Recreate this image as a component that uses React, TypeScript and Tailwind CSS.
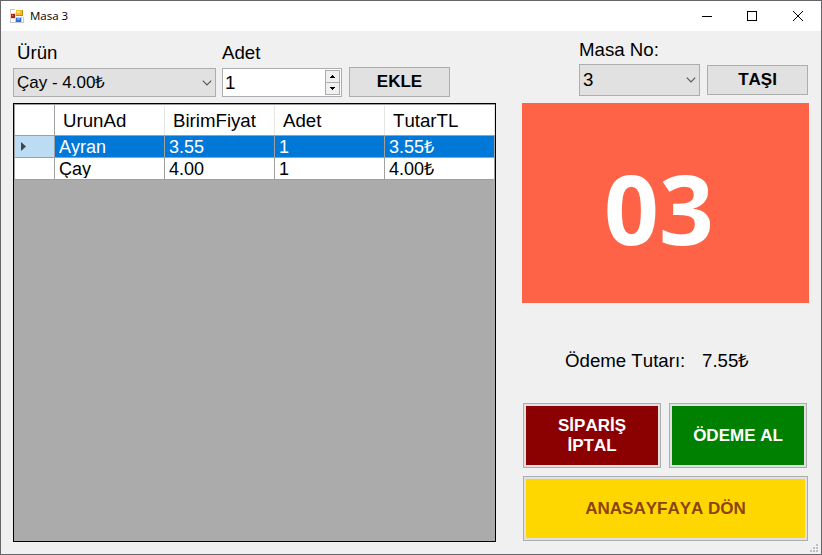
import React from "react";

const rows = [
  { name: "Ayran", price: "3.55", qty: "1", total: "3.55₺", selected: true },
  { name: "Çay", price: "4.00", qty: "1", total: "4.00₺", selected: false },
];

const headers = ["UrunAd", "BirimFiyat", "Adet", "TutarTL"];

function Chevron() {
  return (
    <svg width="10" height="6" viewBox="0 0 10 6" className="shrink-0" fill="none" stroke="#555" strokeWidth="1.1">
      <path d="M0.8 0.7 5 4.9 9.2 0.7" />
    </svg>
  );
}

function FormIcon() {
  return (
    <svg width="14" height="14" viewBox="0 0 14 14" shapeRendering="crispEdges">
      <rect width="14" height="14" fill="#c9c9c9" />
      <path d="M1 1h4v3H1zM1 10h4v3H1zM12 8h1v5h-1z" fill="#fff" />
      <path d="M5 0h9v8H5z" fill="#fff" />
      <rect x="6" y="1" width="7" height="6" fill="#c58a10" />
      <rect x="6" y="1" width="6" height="5" fill="#f6bb2c" />
      <rect x="7" y="2" width="3" height="2" fill="#ffe27c" />
      <rect x="0" y="4" width="6" height="6" fill="#e8d9d6" />
      <rect x="1" y="5" width="4" height="4" fill="#b3200f" />
      <rect x="2" y="6" width="1" height="1" fill="#ee7a60" />
      <rect x="6" y="9" width="5" height="4" fill="#2f6fd8" />
      <rect x="7" y="9" width="3" height="2" fill="#6ba4f5" />
    </svg>
  );
}

function PushButton({ children, className }: { children: React.ReactNode; className: string }) {
  return (
    <button className={`flex shrink-0 items-center justify-center border border-[#adadad] bg-[#e1e1e1] text-[17px] font-bold leading-5 ${className}`}>
      {children}
    </button>
  );
}

function ColorButton({ children, className, fill }: { children: React.ReactNode; className: string; fill: string }) {
  return (
    <button className={`flex shrink-0 border border-[#adadad] bg-[#e1e1e1] p-[2px] text-[17px] font-bold leading-5 ${className}`}>
      <span className={`flex h-full w-full items-center justify-center text-center ${fill}`}>{children}</span>
    </button>
  );
}

function TitleBar() {
  return (
    <header className="flex h-[30px] shrink-0 items-center bg-white pl-[9px]">
      <FormIcon />
      <h1 className="ml-[6px] flex-1 font-['Open_Sans','Noto_Sans',sans-serif] text-[11.5px] leading-4">Masa 3</h1>
      <svg width="10" height="10" className="mr-[35px]" shapeRendering="crispEdges">
        <path d="M0 5.5h10" stroke="#000" />
      </svg>
      <svg width="10" height="10" className="mr-[36px]" fill="none" shapeRendering="crispEdges">
        <path d="M.5.5h9v9h-9z" stroke="#000" />
      </svg>
      <svg width="10" height="10" className="mr-[18px]">
        <path d="M0 0 10 10M10 0 0 10" stroke="#000" />
      </svg>
    </header>
  );
}

function OrderGrid() {
  return (
    <div className="h-[439px] w-[483px] border border-black bg-[#ababab]">
      <div className="w-full border-l border-t border-[#a0a0a0]">
        <div className="flex h-[31px] border-b border-[#a0a0a0] bg-white">
          <div className="w-10 border-r border-[#a0a0a0]" />
          {headers.map((h) => (
            <div key={h} className="mt-px w-[110px] border-r border-[#e5e5e5] pl-2 leading-[29px]">{h}</div>
          ))}
        </div>
        {rows.map((r) => (
          <div key={r.name} className={`flex h-[22px] border-b border-[#a0a0a0] ${r.selected ? "bg-[#0078d7] text-white" : "bg-white"}`}>
            <div className={`flex w-10 items-center border-r border-[#a0a0a0] pl-[6px] ${r.selected ? "bg-[#bcdcf4]" : ""}`}>
              {r.selected && (
                <svg width="5" height="9">
                  <path d="M0 0 5 4.5 0 9z" fill="#444" />
                </svg>
              )}
            </div>
            {[r.name, r.price, r.qty, r.total].map((v, i) => (
              <div key={i} className="w-[110px] border-r border-[#a0a0a0] pl-1">
                <div className="h-5 overflow-hidden text-[18px] leading-[23px]">{v}</div>
              </div>
            ))}
          </div>
        ))}
      </div>
    </div>
  );
}

export default function App() {
  return (
    <div className="flex h-[555px] w-[822px] flex-col overflow-hidden border border-[#66666a] bg-[#f0f0f0] font-['Liberation_Sans',Arial,sans-serif] text-[18.67px] text-black [font-kerning:none]">
      <TitleBar />
      <main className="flex flex-1 pl-3">
        <section className="flex w-[483px] shrink-0 flex-col">
          <div className="flex pl-1 pt-[10px] leading-[23px]">
            <label className="w-[205px]">Ürün</label>
            <label>Adet</label>
          </div>
          <div className="mt-[3px] flex h-[36px] items-start">
            <div className="mt-px flex h-[29px] w-[203px] items-center justify-between border border-[#adadad] bg-[#e1e1e1] pl-[3px] pr-[3px] text-[17px]">
              <span>Çay - 4.00₺</span>
              <Chevron />
            </div>
            <div className="ml-[6px] mt-px flex h-[29px] w-[120px] justify-between border border-[#abadb3] bg-white pl-[2px] leading-[28px]">
              <span>1</span>
              <div className="mr-px mt-px flex h-[25px] w-[15px] flex-col">
                <div className="flex h-[13px] items-center justify-center border border-[#acacac] bg-[#f0f0f0]">
                  <svg width="5" height="3" shapeRendering="crispEdges"><path d="M2 0h1v1h1v1h1v1H0V2h1V1h1z" /></svg>
                </div>
                <div className="flex h-[12px] items-center justify-center border border-t-0 border-[#acacac] bg-[#f0f0f0]">
                  <svg width="5" height="3" shapeRendering="crispEdges"><path d="M0 0h5v1H4v1H3v1H2V2H1V1H0z" /></svg>
                </div>
              </div>
            </div>
            <PushButton className="ml-[7px] h-[30px] w-[101px]">EKLE</PushButton>
          </div>
          <OrderGrid />
        </section>

        <section className="ml-[26px] flex w-[287px] shrink-0 flex-col">
          <div className="pl-[57px] pt-[7px] leading-[23px]">Masa No:</div>
          <div className="mt-[3px] flex h-[39px] items-start pl-[57px]">
            <div className="flex h-[32px] w-[121px] items-center justify-between border border-[#adadad] bg-[#e1e1e1] pl-[3px] pr-[3px]">
              <span>3</span>
              <Chevron />
            </div>
            <PushButton className="ml-[7px] mt-px h-[30px] w-[101px]">TAŞI</PushButton>
          </div>
          <div className="flex h-[200px] items-center justify-center bg-[#ff6347] pr-[13px] pt-[10px] font-['Open_Sans','Noto_Sans',sans-serif] text-[96px] font-bold leading-none text-white">
            03
          </div>
          <div className="mt-[46px] flex h-[23px] pl-[43px] leading-[23px]">
            <span className="w-[137px]">Ödeme Tutarı:</span>
            <span>7.55₺</span>
          </div>
          <div className="mt-[31px] flex gap-2 pl-px">
            <ColorButton className="h-[65px] w-[138px]" fill="bg-[#8b0000] text-white">SİPARİŞ<br />İPTAL</ColorButton>
            <ColorButton className="h-[65px] w-[138px]" fill="bg-[#008000] text-white">ÖDEME AL</ColorButton>
          </div>
          <div className="mt-2 pl-px">
            <ColorButton className="h-[65px] w-[285px]" fill="bg-[#ffd700] text-[#8b4513]">ANASAYFAYA DÖN</ColorButton>
          </div>
        </section>
        <svg width="8" height="8" className="mb-[2px] ml-[1px] shrink-0 self-end" fill="#bfbfbf" shapeRendering="crispEdges">
          <path d="M6 0h2v2H6zM3 3h2v2H3zM6 3h2v2H6zM0 6h2v2H0zM3 6h2v2H3zM6 6h2v2H6z" />
        </svg>
      </main>
    </div>
  );
}
